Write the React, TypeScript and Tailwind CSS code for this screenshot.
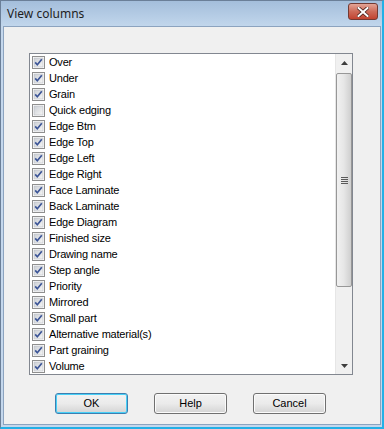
import React from 'react';

const items: { label: string; checked: boolean }[] = [
  { label: 'Over', checked: true },
  { label: 'Under', checked: true },
  { label: 'Grain', checked: true },
  { label: 'Quick edging', checked: false },
  { label: 'Edge Btm', checked: true },
  { label: 'Edge Top', checked: true },
  { label: 'Edge Left', checked: true },
  { label: 'Edge Right', checked: true },
  { label: 'Face Laminate', checked: true },
  { label: 'Back Laminate', checked: true },
  { label: 'Edge Diagram', checked: true },
  { label: 'Finished size', checked: true },
  { label: 'Drawing name', checked: true },
  { label: 'Step angle', checked: true },
  { label: 'Priority', checked: true },
  { label: 'Mirrored', checked: true },
  { label: 'Small part', checked: true },
  { label: 'Alternative material(s)', checked: true },
  { label: 'Part graining', checked: true },
  { label: 'Volume', checked: true },
];

function CheckBox({ checked }: { checked: boolean }) {
  return (
    <svg width="13" height="13" viewBox="0 0 13 13" className="shrink-0">
      <defs>
        <linearGradient id="cbg" x1="0" y1="0" x2="1" y2="1">
          <stop offset="0" stopColor="#cbcfd5" />
          <stop offset="1" stopColor="#f6f6f6" />
        </linearGradient>
      </defs>
      <rect x="0.5" y="0.5" width="12" height="12" fill="#fff" stroke="#8f8f8f" />
      <rect x="2" y="2" width="9" height="9" fill="url(#cbg)" stroke="#b8bcc4" strokeWidth="0.6" />
      {checked && (
        <path d="M3.2 6.4 L5.3 8.8 L9.8 3.2" fill="none" stroke="#3c5597" strokeWidth="1.7" />
      )}
    </svg>
  );
}

function DialogButton({ label, primary }: { label: string; primary?: boolean }) {
  return (
    <button
      className={`w-[73px] h-[21px] rounded-[3px] border text-[11px] text-black bg-gradient-to-b from-[#f2f2f2] via-[#ebebeb] to-[#d4d4d4] ${
        primary ? 'border-[#3c7fb1] shadow-[inset_0_0_0_1px_#48d0f7]' : 'border-[#707070] shadow-[inset_0_0_0_1px_#fbfbfb]'
      }`}
    >
      {label}
    </button>
  );
}

function ScrollBar() {
  return (
    <div className="w-[17px] flex flex-col bg-[#f0f0f0] border-l border-[#e6e6e6]">
      <div className="h-[17px] flex items-center justify-center">
        <svg width="7" height="4" viewBox="0 0 7 4"><path d="M0 4 L3.5 0 L7 4Z" fill="#3d3d3d" /></svg>
      </div>
      <div className="mt-[2px] h-[214px] rounded-[2px] border border-[#979797] bg-gradient-to-r from-[#f1f1f1] via-[#e6e6e6] to-[#cfcfcf] flex items-center justify-center">
        <div className="flex flex-col gap-[1px]">
          <div className="w-[7px] h-[1px] bg-[#5a5a5a]" />
          <div className="w-[7px] h-[1px] bg-[#5a5a5a]" />
          <div className="w-[7px] h-[1px] bg-[#5a5a5a]" />
          <div className="w-[7px] h-[1px] bg-[#5a5a5a]" />
        </div>
      </div>
      <div className="flex-1" />
      <div className="h-[17px] flex items-center justify-center">
        <svg width="7" height="4" viewBox="0 0 7 4"><path d="M0 0 L7 0 L3.5 4Z" fill="#3d3d3d" /></svg>
      </div>
    </div>
  );
}

export default function App() {
  return (
    <div
      className="w-[384px] h-[429px] flex flex-col bg-[#c4d7ec] border-l border-t border-[#6b7f98] border-r-2 border-b-2 border-r-[#23b0e6] border-b-[#23b0e6]"
      style={{ fontFamily: '"Liberation Sans", Arial, sans-serif' }}
    >
      <div className="h-[25px] flex items-center justify-between pl-[6px] pr-[4px] bg-gradient-to-b from-[#a4bedb] to-[#c1d6ec]">
        <span className="text-[12px] text-[#1e1e1e]" style={{ fontFamily: '"Noto Sans", "Open Sans", sans-serif' }}>
          View columns
        </span>
        <div className="w-[30px] h-[17px] mt-[-4px] rounded-[3px] border border-[#733a32] bg-gradient-to-b from-[#e3a496] via-[#cd6a58] to-[#c2422f] flex items-center justify-center">
          <svg width="12" height="10" viewBox="0 0 12 10">
            <path d="M1.5 1 L10.5 9 M10.5 1 L1.5 9" stroke="#4a211b" strokeWidth="3.6" strokeLinecap="square" />
            <path d="M1.5 1 L10.5 9 M10.5 1 L1.5 9" stroke="#ffffff" strokeWidth="2" strokeLinecap="square" />
          </svg>
        </div>
      </div>
      <div className="flex-1 ml-[2px] mr-[1px] mb-[2px] border border-[#8ca3bf] bg-[#f0f0f0] flex flex-col pt-[26px] pl-[25px] pr-[25px]">
        <div className="w-[324px] h-[322px] border border-[#828790] bg-white flex">
          <div className="flex-1 flex flex-col">
            {items.map((it) => (
              <div key={it.label} className="h-[16px] flex items-center pl-[2px] gap-[4px] text-[11px] text-black leading-none pt-[1px]">
                <CheckBox checked={it.checked} />
                <span className="tracking-[-0.2px]">{it.label}</span>
              </div>
            ))}
          </div>
          <ScrollBar />
        </div>
        <div className="mt-[18px] flex pl-[26px] gap-[26px]">
          <DialogButton label="OK" primary />
          <DialogButton label="Help" />
          <DialogButton label="Cancel" />
        </div>
      </div>
    </div>
  );
}
